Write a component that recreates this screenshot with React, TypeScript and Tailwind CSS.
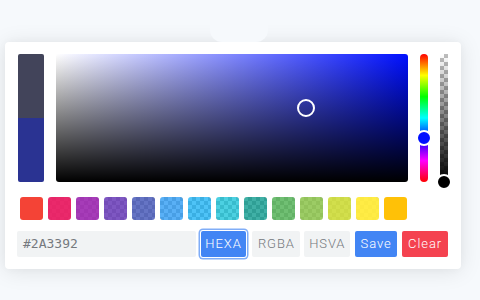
import React from 'react';

// Pickr-style colour picker panel

const swatches = [
  'bg-[rgba(244,67,54,1)]',
  'bg-[rgba(233,30,99,0.95)]',
  'bg-[rgba(156,39,176,0.9)]',
  'bg-[rgba(103,58,183,0.85)]',
  'bg-[rgba(63,81,181,0.8)]',
  'bg-[rgba(33,150,243,0.75)]',
  'bg-[rgba(3,169,244,0.7)]',
  'bg-[rgba(0,188,212,0.7)]',
  'bg-[rgba(0,150,136,0.75)]',
  'bg-[rgba(76,175,80,0.8)]',
  'bg-[rgba(139,195,74,0.85)]',
  'bg-[rgba(205,220,57,0.9)]',
  'bg-[rgba(255,235,59,0.95)]',
  'bg-[rgba(255,193,7,1)]',
];

const checker =
  'bg-[conic-gradient(#bdbdbd_25%,#fff_0_50%,#bdbdbd_0_75%,#fff_0)] bg-[length:8px_8px]';

export default function App() {
  return (
    <div className="h-[300px] w-[480px] overflow-hidden bg-[#f6f9fc] font-['Roboto',sans-serif]">
      {/* trigger button behind the panel */}
      <div className="relative z-10 ml-[210px] h-[42px] w-[58px] rounded-b-[12px] bg-[#f6f9fc]" />

      <div className="relative ml-[5px] h-[227px] w-[456px] rounded-[4px] bg-white px-[13px] pt-[12px] shadow-[0_2px_22px_rgba(0,0,0,0.1),0_0_8px_rgba(0,0,0,0.03)]">
        {/* preview, palette, sliders */}
        <div className="flex h-[128px]">
          <div className="flex w-[26px] flex-col overflow-hidden rounded-[2px]">
            <div className="flex-1 bg-[#42445a]" />
            <div className="flex-1 bg-[#2a3392]" />
          </div>

          <div className="relative ml-[12px] w-[352px] rounded-[3px] bg-[linear-gradient(to_top,#000,transparent),linear-gradient(to_left,#0010ff,#fff)]">
            <div className="absolute left-[241px] top-[45px] h-[18px] w-[18px] rounded-full border-2 border-white" />
          </div>

          <div className="relative ml-[12px] w-[8px] rounded-full bg-[linear-gradient(to_bottom,#f00,#ff0,#0f0,#0ff,#00f,#f0f,#f00)]">
            <div className="absolute left-[-4px] top-[76px] h-[16px] w-[16px] rounded-full border-2 border-white bg-[#0010ff]" />
          </div>

          <div className="relative ml-[12px] w-[8px]">
            <div className={`h-full w-full ${checker}`}>
              <div className="h-full w-full bg-[linear-gradient(to_bottom,transparent,#000)]" />
            </div>
            <div className="absolute left-[-4px] top-[120px] h-[16px] w-[16px] rounded-full border-2 border-white bg-black" />
          </div>
        </div>

        {/* swatches */}
        <div className="mt-[15px] flex gap-[5px] pl-[2px]">
          {swatches.map((c) => (
            <div key={c} className={`h-[23px] w-[23px] overflow-hidden rounded-[3px] ${checker}`}>
              <div className={`h-full w-full ${c}`} />
            </div>
          ))}
        </div>

        {/* result + buttons */}
        <div className="mt-[11px] flex h-[26px] items-stretch text-[13px] font-light tracking-[0.07em]">
          <div className="ml-[-1px] flex w-[179px] items-center rounded-[2px] bg-[#f1f3f4] pl-[6px] font-['DejaVu_Sans_Mono',monospace] font-normal tracking-normal text-[#75797e]">
            #2A3392
          </div>
          <div className="ml-[5px] flex w-[46px] items-center justify-center rounded-[2px] bg-[#4285f4] text-white shadow-[0_0_0_1px_#fff,0_0_0_2.5px_#80adf7]">
            HEXA
          </div>
          <div className="ml-[6px] flex w-[48px] items-center justify-center rounded-[2px] bg-[#f1f3f4] text-[#75797e]">
            RGBA
          </div>
          <div className="ml-[4px] flex w-[46px] items-center justify-center rounded-[2px] bg-[#f1f3f4] text-[#75797e]">
            HSVA
          </div>
          <div className="ml-[5px] flex w-[42px] items-center justify-center rounded-[2px] bg-[#4285f4] text-white">
            Save
          </div>
          <div className="ml-[5px] flex w-[46px] items-center justify-center rounded-[2px] bg-[#f44250] text-white">
            Clear
          </div>
        </div>
      </div>
    </div>
  );
}
